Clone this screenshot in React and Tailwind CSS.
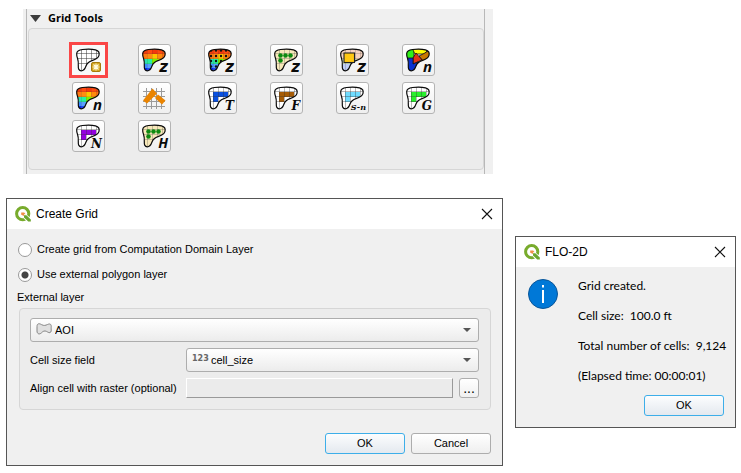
import { useId } from "react";

const OUTLINE =
  "M4.7 9.5C4.9 6.9 7 5.9 10.5 5.5C15 5 20 5 23.5 5.9C26.8 6.8 27.6 9 27 11.4C26.2 14.4 23.4 15.6 20 16.6C16.6 17.6 15 19.2 14 22C13 24.8 11.4 26.8 9.2 26.8C7 26.8 6.1 24.8 6.3 21.6C6.5 18 6.3 16.4 5.5 14.2C4.8 12.4 4.6 11 4.7 9.5Z";

const RAINBOW = [
  [4, 4, "#f03c0a"], [9, 4, "#ff4a10"], [14, 4, "#f4380c"], [19, 4, "#ff4a10"], [24, 4, "#f4500c"],
  [4, 10, "#ff7a10"], [9, 10, "#ff8c10"], [14, 10, "#ffc400"], [19, 10, "#ff8a0c"], [24, 10, "#ff7010"],
  [4, 15, "#2fe0b0"], [9, 15, "#28f0a0"], [14, 15, "#7cf000"], [19, 15, "#c4f000"], [24, 15, "#f0d000"],
  [4, 20, "#3a8cff"], [9, 20, "#58a0ff"], [14, 20, "#58c8ff"],
  [4, 24, "#0a28e8"], [9, 24, "#2048f8"], [14, 24, "#2048f8"],
];

const DOTS = [[10.5, 11.5], [15.5, 11.5], [20.5, 11.5], [10.5, 16.5]];

function Cells({ kind, tint }) {
  if (kind === "rainbow" || kind === "rainbowDots") {
    return (
      <>
        {RAINBOW.map(([x, y, c]) => (
          <rect key={`${x}-${y}`} x={x} y={y} width="6" height="6" fill={c} />
        ))}
      </>
    );
  }
  if (kind === "voronoi") {
    return (
      <g stroke="#111" strokeWidth="0.8">
        <path d="M4 4H12L12 13L10 15H4Z" fill="#30f018" />
        <path d="M10 4H28L22 10H13Z" fill="#ffff00" />
        <path d="M28 6L21 10L17 12L22 18L28 15Z" fill="#c87800" />
        <path d="M14 9L20 16L11 20L11 14Z" fill="#e03418" />
        <path d="M4 14H11L11 20L16 18L12 28H4Z" fill="#0a30d0" />
      </g>
    );
  }
  if (kind === "pale") {
    return (
      <>
        <rect x="4" y="4" width="24" height="11" fill="#f6d3c0" />
        <rect x="4" y="15" width="24" height="5" fill="#dff0c8" />
        <rect x="4" y="20" width="12" height="8" fill="#c0cff8" />
      </>
    );
  }
  if (kind === "sand") return <rect x="4" y="4" width="24" height="24" fill="#f7e8ba" />;
  return (
    <>
      <rect x="4" y="4" width="24" height="24" fill="#fff" />
      {tint && <path d="M9 10H24V15H14V20H9Z" fill={tint} />}
    </>
  );
}

const LINE_OPACITY = { rainbow: 0.15, rainbowDots: 0.15, pale: 0.2, sand: 0.25, cells: 0.35, create: 0.5 };

const LETTERS = {
  z: { font: "'DejaVu Sans', sans-serif", size: 15 },
  n: { font: "'Open Sans', sans-serif", size: 15 },
  H: { font: "'Open Sans', sans-serif", size: 14 },
  "S-n": { font: "'DejaVu Serif', serif", size: 8 },
  serif: { font: "'DejaVu Serif', serif", size: 12 },
};

function DomainIcon({ kind, tint, letter }) {
  const clip = useId();
  const type = LETTERS[letter] ?? LETTERS.serif;
  return (
    <svg viewBox="0 0 33 32" className="h-8 w-[33px] overflow-visible" aria-hidden="true">
      <clipPath id={clip}>
        <path d={OUTLINE} />
      </clipPath>
      <g clipPath={`url(#${clip})`}>
        <Cells kind={kind} tint={tint} />
        {kind !== "voronoi" && (
          <path
            d="M9.5 4V28M14.5 4V28M19.5 4V28M24.5 4V28M4 9.5H28M4 14.5H28M4 19.5H28"
            stroke="#333"
            strokeOpacity={LINE_OPACITY[kind]}
          />
        )}
        {kind === "rainbowDots" &&
          [7, 12, 17, 22].map((x) =>
            [6.5, 12, 17, 22.5].map((y) => <circle key={`${x}-${y}`} cx={x} cy={y} r="1.2" fill="#111" />)
          )}
      </g>
      {kind === "sand" && DOTS.map(([x, y]) => <circle key={`${x}-${y}`} cx={x} cy={y} r="2.3" fill="#0c8a10" />)}
      <path d={OUTLINE} fill="none" stroke="#0a0a0a" strokeWidth="1.2" />
      {kind === "pale" && <rect x="8" y="9" width="10.5" height="9.5" fill="#ffc814" stroke="#222" strokeWidth="1.1" />}
      {letter && (
        <text
          x="30"
          y="28"
          textAnchor="end"
          fontStyle="italic"
          fontWeight="bold"
          fontSize={type.size}
          fontFamily={type.font}
          fill="#0a0a0a"
        >
          {letter}
        </text>
      )}
      {kind === "create" && (
        <g>
          <rect x="19.5" y="18.5" width="9" height="9" rx="1.5" fill="#d3a520" stroke="#a87c0c" />
          <path d="M24 19.5V26.5M20.5 23H27.5M21.5 20.5L26.5 25.5M26.5 20.5L21.5 25.5" stroke="#fffbe0" strokeWidth="1.1" />
        </g>
      )}
    </svg>
  );
}

function ReduceIcon() {
  return (
    <svg viewBox="0 0 33 32" className="h-8 w-[33px]" aria-hidden="true">
      <path d="M8.5 6V27M13.5 6V27M18.5 6V27M23.5 6V27M5 9.5H27M5 14.5H27M5 19.5H27M5 24.5H27" stroke="#9a9a9a" />
      <path d="M5 18.5L14.5 6.5L19 11.5L9 21.5Z" fill="#ea8400" />
      <path d="M17 16L20 12.5L27.5 18.5L24 22.5Z" fill="#ea8400" />
    </svg>
  );
}

const TOOLS = [
  { name: "Create grid", kind: "create", active: true },
  { name: "Sample elevation", kind: "rainbow", letter: "z" },
  { name: "Interpolate elevation from points", kind: "rainbowDots", letter: "z" },
  { name: "Elevation from LiDAR", kind: "sand", letter: "z" },
  { name: "Correct elevation", kind: "pale", letter: "z" },
  { name: "Sample roughness polygons", kind: "voronoi", letter: "n" },
  { name: "Sample roughness raster", kind: "rainbow", letter: "n" },
  { name: "Reduction factors", kind: "reduce" },
  { name: "Tolerance values", kind: "cells", tint: "#0a50e0", letter: "T" },
  { name: "Froude values", kind: "cells", tint: "#a65c06", letter: "F" },
  { name: "Shallow n values", kind: "cells", tint: "#6fdcff", letter: "S-n" },
  { name: "Gutters", kind: "cells", tint: "#28f02c", letter: "G" },
  { name: "No-exchange cells", kind: "cells", tint: "#9400e0", letter: "N" },
  { name: "Assign hydrology", kind: "sand", letter: "H" },
];

function GridTools() {
  return (
    <section className="mx-[17px] w-full max-w-[470px] bg-[#f0f0f0] pr-2 pl-[3px]">
      <div className="border-x border-[#b8b8b8] pb-1">
        <h2 className="flex h-[19px] items-center gap-[7px] pl-[3px] font-['Open_Sans',sans-serif] text-[11px] font-bold">
          <svg viewBox="0 0 11 7" className="h-[7px] w-[11px]" aria-hidden="true">
            <path d="M0 0H11L5.5 7Z" fill="#3c3c3c" />
          </svg>
          Grid Tools
        </h2>
        <div className="ml-px h-[142px] rounded-sm border border-[#d6d6d6] bg-[#ececec] pt-[15px] pl-[43px]">
          <div className="grid w-fit grid-cols-6 gap-x-[33px] gap-y-[6px]">
            {TOOLS.map((t) => (
              <button
                key={t.name}
                aria-label={t.name}
                className={
                  t.active
                    ? "-mx-[3px] -my-[2px] flex h-9 w-[39px] items-center justify-center border-3 border-[#fa4646] bg-[#f8f8f8]"
                    : "flex h-8 w-[33px] items-center justify-center rounded-[3px] border border-[#b4b4b4] bg-linear-to-b from-white to-[#efefef]"
                }
              >
                <span className="-m-px">{t.kind === "reduce" ? <ReduceIcon /> : <DomainIcon {...t} />}</span>
              </button>
            ))}
          </div>
        </div>
      </div>
    </section>
  );
}

function QgisLogo() {
  return (
    <svg viewBox="0 0 16 16" className="size-4" aria-hidden="true">
      <circle cx="7.7" cy="7.7" r="6.1" fill="none" stroke="#78ab2c" strokeWidth="3" />
      <path d="M7.5 8L10.5 7.5L16 12.5V16H12L7.5 11Z" fill="#fff" />
      <path d="M9 9.2H11.4L15.8 13.4V15.6H13.2L9 11.6Z" fill="#6ca52e" />
      <path d="M6.2 6.4H9.2L10.6 8.2H9V10L6.2 8.8Z" fill="#f09045" />
    </svg>
  );
}

function TitleBar({ title }) {
  return (
    <header className="flex h-[30px] items-center bg-white pr-[9px] pl-2">
      <QgisLogo />
      <h2 className="ml-[5px] flex-1 text-[12px]">{title}</h2>
      <button aria-label="Close">
        <svg viewBox="0 0 12 12" className="size-3" aria-hidden="true">
          <path d="M1 1L11 11M11 1L1 11" stroke="#111" strokeWidth="1.1" />
        </svg>
      </button>
    </header>
  );
}

function PushButton({ children, primary }) {
  return (
    <button
      className={
        primary
          ? "h-[21px] w-20 rounded-[3px] border border-[#3daee9] bg-linear-to-b from-[#fcfdfe] to-[#e4e9ef]"
          : "h-[21px] w-20 rounded-[3px] border border-[#adadad] bg-linear-to-b from-white to-[#efefef]"
      }
    >
      {children}
    </button>
  );
}

function Radio({ label, defaultChecked }) {
  return (
    <label className="flex h-[25px] items-center gap-[5px]">
      <input
        type="radio"
        name="source"
        defaultChecked={defaultChecked}
        className="size-[14px] appearance-none rounded-full border border-[#999] bg-white checked:bg-radial checked:from-[#444] checked:from-[3px] checked:to-white checked:to-[4px]"
      />
      {label}
    </label>
  );
}

function Combo({ id, label, value, icon }) {
  return (
    <div className="relative flex-1">
      <select
        id={id}
        aria-label={label}
        className="block h-6 w-full appearance-none rounded-[3px] border border-[#adadad] bg-linear-to-b from-white to-[#ececec] pl-6"
      >
        <option>{value}</option>
      </select>
      <span className="pointer-events-none absolute inset-y-0 left-[6px] flex items-center pb-[2px]">{icon}</span>
      <svg viewBox="0 0 8 4" className="pointer-events-none absolute top-[10px] right-2 h-1 w-2" aria-hidden="true">
        <path d="M0 0H8L4 4Z" fill="#555" />
      </svg>
    </div>
  );
}

function CreateGridDialog() {
  return (
    <section className="min-w-0 flex-1 border border-[#555] bg-[#f0f0f0]">
      <TitleBar title="Create Grid" />
      <div className="px-[11px] pt-2 pb-[11px]">
        <Radio label="Create grid from Computation Domain Layer" />
        <Radio label="Use external polygon layer" defaultChecked />
        <fieldset>
          <legend className="-ml-px h-[21px] leading-[21px]">External layer</legend>
          <div className="ml-px flex h-[102px] flex-col gap-[6px] rounded-sm border border-[#d6d6d6] bg-[#ececec] py-[9px] pr-[11px] pl-[10px]">
            <div className="flex">
              <Combo
                label="External layer"
                value="AOI"
                icon={
                  <svg viewBox="0 0 16 12" className="h-3 w-4" aria-hidden="true">
                    <path
                      d="M1 3.5C1 0 3.5.4 5.5 1.6C8 3 9.5 2.4 11.5 1.5C14.5.2 15.5 1.5 15.2 4.5C15 6.5 15.6 7.5 14.8 9C13.8 10.5 12 9.2 10.5 8.4C8.5 7.4 7 8.2 5.5 9.8C3.5 11.8 1 11 1 8Z"
                      fill="#e0e0e0"
                      stroke="#858585"
                    />
                  </svg>
                }
              />
            </div>
            <div className="flex items-center">
              <label htmlFor="cell-size" className="w-[156px]">Cell size field</label>
              <Combo
                id="cell-size"
                value="cell_size"
                icon={<span className="font-['DejaVu_Sans',sans-serif] text-[8px] font-bold text-[#666]">123</span>}
              />
            </div>
            <div className="flex items-center">
              <label htmlFor="raster" className="w-[156px] whitespace-nowrap">Align cell with raster (optional)</label>
              <input
                id="raster"
                disabled
                className="h-5 min-w-0 flex-1 border border-t-white border-r-[#999] border-b-[#999] border-l-white bg-[#ebebeb]"
              />
              <button
                aria-label="Browse"
                className="ml-[6px] h-5 w-5 rounded-[3px] border border-[#adadad] bg-linear-to-b from-white to-[#f0f0f0] text-[14px] leading-[18px]"
              >
                ...
              </button>
            </div>
          </div>
        </fieldset>
        <div className="mt-[23px] flex justify-end gap-[6px]">
          <PushButton primary>OK</PushButton>
          <PushButton>Cancel</PushButton>
        </div>
      </div>
    </section>
  );
}

function MessageDialog() {
  return (
    <section className="w-[221px] shrink-0 border border-[#555] bg-[#f0f0f0]">
      <TitleBar title="FLO-2D" />
      <div className="px-[11px] pt-1 pb-[11px]">
        <div className="flex gap-5">
          <svg viewBox="0 0 30 30" className="mt-2 ml-px size-[30px] shrink-0" aria-hidden="true">
            <circle cx="15" cy="15" r="14.5" fill="#0078d7" stroke="#0a5598" />
            <path d="M15 6V8.5M15 11V24" stroke="#fff" strokeWidth="2" />
          </svg>
          <div className="font-['Lato','Open_Sans',sans-serif] text-[12px] leading-[30px] whitespace-pre">
            <p>Grid created.</p>
            <p>Cell size:  100.0 ft</p>
            <p>Total number of cells:  9,124</p>
            <p>(Elapsed time: 00:00:01)</p>
          </div>
        </div>
        <div className="mt-1 flex justify-end">
          <PushButton primary>OK</PushButton>
        </div>
      </div>
    </section>
  );
}

export default function App() {
  return (
    <main className="min-h-screen bg-white pt-[9px] pr-[5px] pl-[6px] font-['Liberation_Sans',Arial,sans-serif] text-[11px] text-black">
      <GridTools />
      <div className="mt-6 flex items-start gap-3 pb-[7px]">
        <CreateGridDialog />
        <div className="pt-[38px]">
          <MessageDialog />
        </div>
      </div>
    </main>
  );
}
